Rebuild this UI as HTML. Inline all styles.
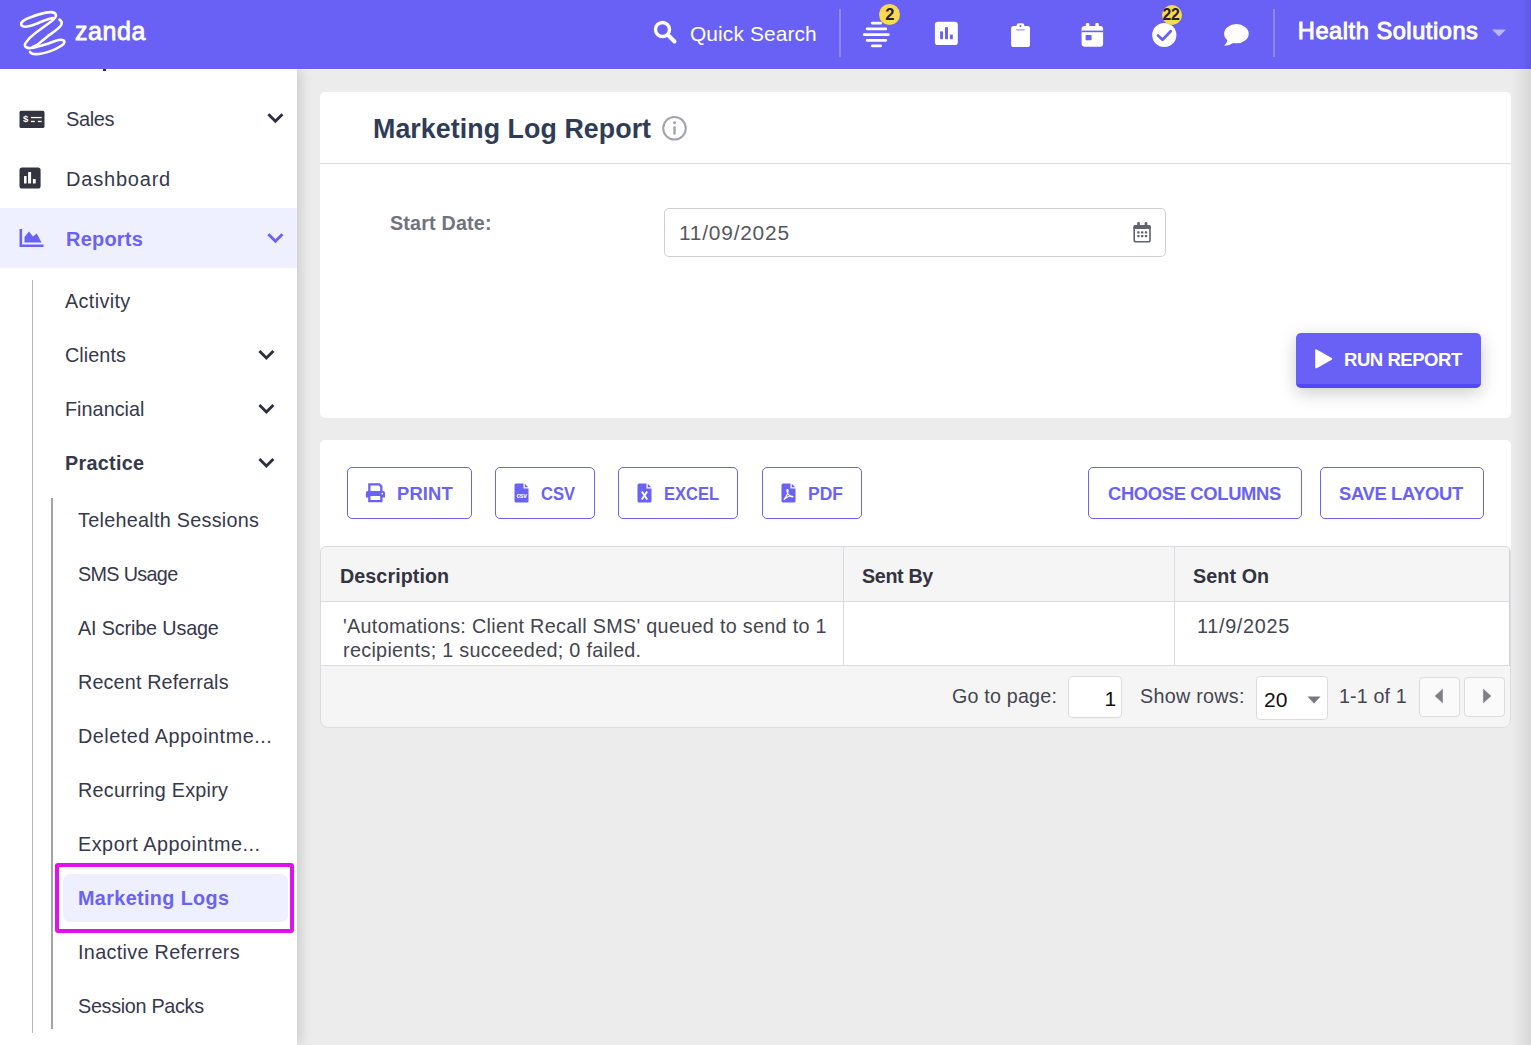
<!DOCTYPE html>
<html lang="en">
<head>
<meta charset="utf-8">
<title>Marketing Log Report</title>
<style>
*{box-sizing:border-box;margin:0;padding:0}
html,body{width:1531px;height:1045px;overflow:hidden}
body{font-family:"Liberation Sans",sans-serif;background:#ececec;color:#2d2f45;position:relative}
.abs{position:absolute}
.t{position:absolute;white-space:nowrap;line-height:1}
/* header */
#hdr{position:absolute;left:0;top:0;width:1531px;height:69px;background:#6961f5;z-index:5}
#hdr .t{color:#fff}
.vdiv{position:absolute;top:9px;width:2px;height:48px;background:#8f89f8}
.badge{position:absolute;width:21px;height:21px;border-radius:50%;background:#f9d94e;color:#23232f;font-weight:700;font-size:16.5px;line-height:21px;text-align:center}
/* sidebar */
#side{position:absolute;left:0;top:69px;width:297px;height:976px;background:#fff;box-shadow:3px 0 12px rgba(0,0,0,.15);z-index:3;overflow:hidden}
#side .t{color:#36384c}
.m1{font-size:20px}
.m2{font-size:19.8px}
/* main */
.card{position:absolute;background:#fff;border-radius:5px}
.obtn{position:absolute;top:467px;height:52px;border:1px solid #6962f4;border-radius:5px;background:#fff;color:#6962f4;font-weight:700;font-size:18.4px;letter-spacing:-.35px;line-height:49px;white-space:nowrap}
.obtn span{position:absolute;top:1px}
.obtn svg{position:absolute}
</style>
</head>
<body>

<!-- ============ HEADER ============ -->
<div id="hdr">
  <svg class="abs" style="left:0;top:0" width="160" height="69" viewBox="0 0 160 69" fill="none" stroke="#fff" stroke-width="2.7" stroke-linecap="round" stroke-linejoin="round">
    <g transform="translate(42.9 33.4) scale(.955 .965) translate(-42.9 -33.4)"><path d="M53.6,17.5 C47,18.5 40,22 35.4,23.7 C29,26.2 22.5,28 20.5,25 C18.5,21.5 25,18.5 30.1,16.7 C35,14.8 41,12.8 46.1,11.9 C51,11 56,11.5 56.6,14.6 C57,17 54,19 51.5,21 L35.4,32.8 C31,36 27,40 24.7,43.5 C23.5,45.5 24,47 25.2,47.6 C27,48.8 28.5,48.8 30.1,48.6 C35,48 41,46.2 46.1,44.6 C51,43 55,41.2 59.5,40.3 C63,39.6 65.8,40.5 65.4,42.6 C65,44.5 64,45 62.2,46.2 C59,48.3 55,50.3 51.5,51.5 C46,53.4 40,55 35.4,54.9 C32.5,54.9 30.3,54.3 29.4,52.5"/>
    <path d="M60.3,19.1 C62.3,20.3 63.2,22 62.2,24.4 C60.3,28.3 53,32.5 48.3,36 L36.5,45.6 L32.2,47.5"/></g>
  </svg>
  <div class="t" style="left:75px;top:19px;font-size:25px;-webkit-text-stroke:.8px #fff;letter-spacing:.55px">zanda</div>

  <!-- search -->
  <svg class="abs" style="left:652px;top:19px" width="26" height="26" viewBox="0 0 26 26" fill="none" stroke="#fff" stroke-linecap="round">
    <circle cx="10.5" cy="10.5" r="7" stroke-width="3.4"/>
    <path d="M16,16 L22.5,22.5" stroke-width="4"/>
  </svg>
  <div class="t" style="left:690px;top:23.5px;font-size:20.9px;letter-spacing:.12px">Quick Search</div>
  <div class="vdiv" style="left:839px"></div>

  <!-- stack/list icon -->
  <svg class="abs" style="left:862px;top:20px" width="30" height="30" viewBox="0 0 30 30" fill="none" stroke="#fff" stroke-width="2.8" stroke-linecap="round">
    <path d="M10.3,3.2H18.6M5.1,8.9H23.8M2.2,14.6H26.4M5.1,20.3H23.8M10.3,25.9H18.6"/>
  </svg>
  <div class="badge" style="left:879.4px;top:4.4px">2</div>

  <!-- chart icon -->
  <svg class="abs" style="left:934px;top:21px" width="26" height="26" viewBox="0 0 26 26">
    <rect x=".9" y=".7" width="22.9" height="23.4" rx="3.2" fill="#fff"/>
    <rect x="6.1" y="10.4" width="2.9" height="7.8" fill="#6961f5"/>
    <rect x="11" y="6.2" width="3" height="12" fill="#6961f5"/>
    <rect x="15.9" y="13.6" width="2.9" height="4.6" fill="#6961f5"/>
  </svg>

  <!-- clipboard -->
  <svg class="abs" style="left:1008px;top:20px" width="24" height="30" viewBox="0 0 24 30">
    <rect x="3.1" y="5.9" width="18.9" height="21.1" rx="2.6" fill="#fff"/>
    <rect x="8.6" y="3.3" width="7.8" height="6" rx="2.4" fill="#fff"/>
    <circle cx="12.5" cy="6.1" r="1" fill="#6961f5"/>
    <rect x="8.2" y="9.5" width="8.6" height=".8" fill="#6961f5"/>
  </svg>

  <!-- calendar -->
  <svg class="abs" style="left:1079px;top:20px" width="26" height="30" viewBox="-.6 0 26 30">
    <rect x="2" y="6" width="21.5" height="20.8" rx="3" fill="#fff"/>
    <rect x="6.3" y="3" width="3.4" height="6" rx="1.2" fill="#fff"/>
    <rect x="15.8" y="3" width="3.4" height="6" rx="1.2" fill="#fff"/>
    <rect x="2" y="10.6" width="21.5" height="1.6" fill="#6961f5"/>
    <rect x="6" y="15" width="6" height="5.3" rx=".8" fill="#6961f5"/>
  </svg>

  <!-- check circle -->
  <svg class="abs" style="left:1150px;top:21px" width="28" height="28" viewBox="0 0 28 28">
    <circle cx="14.3" cy="14" r="12.1" fill="#fff"/>
    <path d="M8,14.4 L12.5,18.7 L20.7,10.2" fill="none" stroke="#6961f5" stroke-width="2.7" stroke-linecap="round" stroke-linejoin="round"/>
  </svg>
  <div class="badge" style="left:1162px;top:5px;width:20px;height:20px;line-height:20px;font-size:15.8px;letter-spacing:-.5px;text-indent:-2.2px;overflow:visible;white-space:nowrap">22</div>

  <!-- chat bubble -->
  <svg class="abs" style="left:1222px;top:22px" width="30" height="28" viewBox="0 0 30 28">
    <ellipse cx="14.4" cy="11.7" rx="12.3" ry="9.6" fill="#fff"/>
    <path d="M5.6,16.5 C5.2,20 4,22 2,23.6 C5.8,23.8 9.3,22.6 11.8,20.5 Z" fill="#fff"/>
  </svg>
  <div class="vdiv" style="left:1273px"></div>
  <div class="abs" style="right:0;top:0;width:9px;height:69px;background:linear-gradient(to right,rgba(0,0,0,0),rgba(0,0,0,.09))"></div>
  <div class="t" style="left:1297.8px;top:19.5px;font-size:23.6px;-webkit-text-stroke:.95px #fff;letter-spacing:.55px">Health Solutions</div>
  <svg class="abs" style="left:1491px;top:28px" width="16" height="10" viewBox="0 0 16 10"><path d="M1,1.5H15L8,8.5Z" fill="#b9b5fb"/></svg>
</div>

<!-- ============ SIDEBAR ============ -->
<div id="side">
  <!-- clipped previous item descender -->
  <div class="abs" style="left:103px;top:0;width:3px;height:2px;background:#2d2f45"></div>

  <!-- Sales -->
  <svg class="abs" style="left:19px;top:41.3px" width="27" height="20" viewBox="0 0 27 20">
    <rect x=".5" y=".8" width="25" height="17.3" rx="1.6" fill="#33343f"/>
    <text x="3.9" y="12.2" font-family="Liberation Sans,sans-serif" font-size="9.6" font-weight="700" fill="#fff">$</text>
    <rect x="11.9" y="6.9" width="10.8" height="1.3" fill="#fff"/>
    <rect x="11.9" y="10.8" width="3.9" height="1.3" fill="#fff"/><rect x="18.9" y="10.8" width="3.8" height="1.3" fill="#fff"/>
  </svg>
  <div class="t m1" style="left:66px;top:40px;letter-spacing:-.4px">Sales</div>
  <svg class="abs" style="left:266px;top:43px" width="18" height="14" viewBox="0 .8 18 14"><path d="M2.4,3 L9.4,10 L16.4,3" fill="none" stroke="#2d2f45" stroke-width="2.9"/></svg>

  <!-- Dashboard -->
  <svg class="abs" style="left:19px;top:98px" width="23" height="23" viewBox="0 0 23 23">
    <rect x=".5" y=".4" width="21.1" height="21.1" rx="2.6" fill="#33343f"/>
    <rect x="5" y="9.1" width="2.6" height="7.3" rx=".5" fill="#fff"/><rect x="9.1" y="5" width="3" height="11.4" rx=".5" fill="#fff"/><rect x="13.9" y="12.1" width="2.8" height="4.3" rx=".5" fill="#fff"/>
  </svg>
  <div class="t m1" style="left:66px;top:100px;letter-spacing:.8px">Dashboard</div>

  <!-- Reports (active) -->
  <div class="abs" style="left:0;top:139px;width:297px;height:60px;background:#eef0ff"></div>
  <svg class="abs" style="left:19px;top:159px" width="26" height="20" viewBox="0 0 26 20">
    <path d="M1.8,1 V17.8 H24.5" fill="none" stroke="#6962f4" stroke-width="2.6"/>
    <path d="M5.5,14.5 V9 L10,3.5 L14,8.5 L17.8,5.5 L22.5,14.5 Z" fill="#6962f4"/>
  </svg>
  <div class="t m1" style="left:66px;top:160px;font-weight:700;color:#6962f4;font-size:20px;letter-spacing:.2px">Reports</div>
  <svg class="abs" style="left:266px;top:163px" width="18" height="14" viewBox="0 .8 18 14"><path d="M2.4,3 L9.4,10 L16.4,3" fill="none" stroke="#6962f4" stroke-width="2.9"/></svg>

  <!-- tree lines -->
  <div class="abs" style="left:32px;top:211px;width:1px;height:753px;background:#b4b4bd"></div>
  <div class="abs" style="left:51px;top:429px;width:2px;height:531px;background:#a4a4af"></div>

  <!-- level 2 -->
  <div class="t m2" style="left:65px;top:223px;letter-spacing:0.36px">Activity</div>
  <div class="t m2" style="left:65px;top:277px;letter-spacing:0.07px">Clients</div>
  <svg class="abs" style="left:257px;top:279px" width="18" height="14" viewBox="0 0 18 14"><path d="M2.4,3 L9.4,10 L16.4,3" fill="none" stroke="#2d2f45" stroke-width="2.9"/></svg>
  <div class="t m2" style="left:65px;top:331px;letter-spacing:0.04px">Financial</div>
  <svg class="abs" style="left:257px;top:333px" width="18" height="14" viewBox="0 0 18 14"><path d="M2.4,3 L9.4,10 L16.4,3" fill="none" stroke="#2d2f45" stroke-width="2.9"/></svg>
  <div class="t m2" style="left:65px;top:385px;font-weight:700;letter-spacing:0.29px">Practice</div>
  <svg class="abs" style="left:257px;top:387px" width="18" height="14" viewBox="0 0 18 14"><path d="M2.4,3 L9.4,10 L16.4,3" fill="none" stroke="#2d2f45" stroke-width="2.9"/></svg>

  <!-- level 3 -->
  <div class="t m2" style="left:78px;top:442px;letter-spacing:0.28px">Telehealth Sessions</div>
  <div class="t m2" style="left:78px;top:496px;letter-spacing:-0.67px">SMS Usage</div>
  <div class="t m2" style="left:78px;top:550px;letter-spacing:-0.15px">AI Scribe Usage</div>
  <div class="t m2" style="left:78px;top:604px;letter-spacing:0.14px">Recent Referrals</div>
  <div class="t m2" style="left:78px;top:658px;letter-spacing:0.53px">Deleted Appointme...</div>
  <div class="t m2" style="left:78px;top:712px;letter-spacing:0.25px">Recurring Expiry</div>
  <div class="t m2" style="left:78px;top:766px;letter-spacing:0.52px">Export Appointme...</div>
  <div class="abs" style="left:55px;top:794px;width:239px;height:70px;border:4px solid #e010ef;border-radius:3px"></div>
  <div class="abs" style="left:63px;top:805px;width:225px;height:48px;background:#eef0ff;border-radius:7px"></div>
  <div class="t m2" style="left:78px;top:820px;font-weight:700;color:#6962f4;letter-spacing:0.37px">Marketing Logs</div>
  <div class="t m2" style="left:78px;top:874px;letter-spacing:0.32px">Inactive Referrers</div>
  <div class="t m2" style="left:78px;top:928px;letter-spacing:-0.31px">Session Packs</div>
</div>

<!-- ============ MAIN ============ -->
<div class="abs" style="left:297px;top:69px;width:1234px;height:1px;background:#f3f3ef"></div>
<div class="abs" style="right:0;top:0;width:20px;height:1045px;background:linear-gradient(to right,rgba(0,0,0,0),rgba(0,0,0,.085));z-index:4"></div>
<div class="card" style="left:320px;top:92px;width:1191px;height:326px"></div>
<div class="abs" style="left:320px;top:163px;width:1191px;height:1px;background:#d9d9de"></div>
<div class="t" style="left:373px;top:115.5px;font-size:26.8px;font-weight:700;color:#303c57;letter-spacing:.06px">Marketing Log Report</div>
<svg class="abs" style="left:661px;top:115px" width="27" height="27" viewBox="0 0 27 27">
  <circle cx="13.5" cy="13.2" r="11.3" fill="none" stroke="#a3a3ad" stroke-width="2"/>
  <rect x="12.3" y="11.3" width="2.4" height="8.5" rx="1" fill="#a3a3ad"/><circle cx="13.5" cy="7.8" r="1.5" fill="#a3a3ad"/>
</svg>

<div class="t" style="left:390px;top:214px;font-size:19.7px;font-weight:700;color:#6f7380;letter-spacing:.2px">Start Date:</div>
<div class="abs" style="left:664px;top:208px;width:502px;height:49px;border:1px solid #cfcfd4;border-radius:5px;background:#fff"></div>
<div class="t" style="left:679px;top:223px;font-size:20.9px;color:#55575f;letter-spacing:.78px">11/09/2025</div>
<svg class="abs" style="left:1132px;top:221px" width="20" height="23" viewBox="0 0 20 23">
  <rect x="2.2" y="4.7" width="15.8" height="16.1" rx="1.8" fill="none" stroke="#60626e" stroke-width="1.6"/>
  <path d="M1.4,8 V6 A2,2 0 0 1 3.4,3.9 H16.8 A2,2 0 0 1 18.8,6 V8 Z" fill="#60626e"/>
  <rect x="5.2" y="1.1" width="2.7" height="4.5" rx="1.3" fill="#60626e"/><rect x="12.6" y="1.1" width="2.7" height="4.5" rx="1.3" fill="#60626e"/>
  <g fill="#60626e"><rect x="5.2" y="10.2" width="2.4" height="2.4" rx=".7"/><rect x="9" y="10.2" width="2.4" height="2.4" rx=".7"/><rect x="12.8" y="10.2" width="2.4" height="2.4" rx=".7"/>
  <rect x="5.2" y="13.9" width="2.4" height="2.4" rx=".7"/><rect x="9" y="13.9" width="2.4" height="2.4" rx=".7"/><rect x="12.8" y="13.9" width="2.4" height="2.4" rx=".7"/></g>
</svg>

<!-- run report -->
<div class="abs" style="left:1296px;top:333px;width:185px;height:55px;background:#6961f5;border-bottom:4px solid #5349f4;border-radius:5px;box-shadow:0 5px 18px rgba(0,0,0,.2)"></div>
<svg class="abs" style="left:1314px;top:348px" width="20" height="22" viewBox="0 0 20 22"><path d="M2.2,2.3 L17.2,10.8 L2.2,19.3 Z" fill="#fff" stroke="#fff" stroke-width="2" stroke-linejoin="round"/></svg>
<div class="t" style="left:1344px;top:350.5px;font-size:18.5px;font-weight:700;color:#fff;letter-spacing:-.45px">RUN REPORT</div>

<!-- card 2 -->
<div class="card" style="left:320px;top:440px;width:1191px;height:120px"></div>

<div class="obtn" style="left:347px;width:125px">
  <svg style="left:17px;top:15px" width="21" height="20" viewBox="0 0 21 20" fill="#6962f4"><path d="M3.2,.2 H14.8 L17.5,2.9 V8.6 H15.2 V3.9 L13.9,2.6 H5.5 V8.6 H3.2 Z"/><path fill-rule="evenodd" d="M3,8.1 H18 A2,2 0 0 1 20,10.1 V14.6 H17.5 V19.3 H3.2 V14.6 H.9 V10.1 A2,2 0 0 1 3,8.1 Z M5.5,13 V17 H15.2 V13 Z"/><circle cx="17.3" cy="10.7" r=".85" fill="#fff"/></svg>
  <span style="left:49px;letter-spacing:.15px">PRINT</span>
</div>
<div class="obtn" style="left:495px;width:100px">
  <svg style="left:18px;top:15px" width="16" height="20" viewBox="0 0 16 20"><path d="M2,.5 H9.5 V5.5 H14.5 V18 A1.5,1.5 0 0 1 13,19.5 H2 A1.5,1.5 0 0 1 .5,18 V2 A1.5,1.5 0 0 1 2,.5 Z M10.8,.8 L14.2,4.3 H10.8 Z" fill="#6962f4"/><text x="7.5" y="15" text-anchor="middle" font-family="Liberation Sans,sans-serif" font-size="6.6" font-weight="700" fill="#fff">csv</text></svg>
  <span style="left:45px;letter-spacing:0;transform:scaleX(.905);transform-origin:0 50%">CSV</span>
</div>
<div class="obtn" style="left:618px;width:120px">
  <svg style="left:18px;top:15px" width="16" height="20" viewBox="0 0 16 20"><path d="M2,.5 H9.5 V5.5 H14.5 V18 A1.5,1.5 0 0 1 13,19.5 H2 A1.5,1.5 0 0 1 .5,18 V2 A1.5,1.5 0 0 1 2,.5 Z M10.8,.8 L14.2,4.3 H10.8 Z" fill="#6962f4"/><path d="M4.8,8.5 L10.2,16.5 M10.2,8.5 L4.8,16.5" stroke="#fff" stroke-width="1.9" fill="none"/></svg>
  <span style="left:45px;letter-spacing:0;transform:scaleX(.897);transform-origin:0 50%">EXCEL</span>
</div>
<div class="obtn" style="left:762px;width:100px">
  <svg style="left:18px;top:15px" width="16" height="20" viewBox="0 0 16 20"><path d="M2,.5 H9.5 V5.5 H14.5 V18 A1.5,1.5 0 0 1 13,19.5 H2 A1.5,1.5 0 0 1 .5,18 V2 A1.5,1.5 0 0 1 2,.5 Z M10.8,.8 L14.2,4.3 H10.8 Z" fill="#6962f4"/><path d="M6.2,6.5 C8,6 7.5,11 3.3,16.2 C2.5,17 3.5,16 6,14.3 C8.5,13 11,12.8 12,13.5 C12.5,14.5 9,14 6.8,10.5 C6,9 5.5,7 6.2,6.5" stroke="#fff" stroke-width="1.1" fill="none"/></svg>
  <span style="left:45px;letter-spacing:0;transform:scaleX(.948);transform-origin:0 50%">PDF</span>
</div>
<div class="obtn" style="left:1088px;width:214px"><span style="left:19px">CHOOSE COLUMNS</span></div>
<div class="obtn" style="left:1320px;width:164px"><span style="left:18px">SAVE LAYOUT</span></div>

<!-- grid -->
<div class="abs" style="left:320px;top:546px;width:1191px;height:182px;border:1px solid #dcdce0;border-radius:6px 6px 8px 8px;background:#f5f5f5"></div>
<div class="abs" style="left:321px;top:601px;width:1188px;height:65px;background:#fff;border-top:1px solid #dcdce0;border-bottom:1px solid #dcdce0"></div>
<div class="abs" style="left:843px;top:547px;width:1px;height:119px;background:#dcdce0"></div>
<div class="abs" style="left:1174px;top:547px;width:1px;height:119px;background:#dcdce0"></div>
<div class="abs" style="left:1509px;top:549px;width:1px;height:117px;background:#d2d2d9"></div>

<div class="t" style="left:340px;top:567px;font-size:19.7px;font-weight:700;color:#33343f;letter-spacing:.08px">Description</div>
<div class="t" style="left:862px;top:567px;font-size:19.7px;font-weight:700;color:#33343f;letter-spacing:-.35px">Sent By</div>
<div class="t" style="left:1193px;top:567px;font-size:19.7px;font-weight:700;color:#33343f;letter-spacing:.1px">Sent On</div>

<div class="t" style="left:343px;top:616.5px;font-size:19.8px;color:#44454f;letter-spacing:.3px">'Automations: Client Recall SMS' queued to send to 1</div>
<div class="t" style="left:343px;top:641px;font-size:19.8px;color:#44454f;letter-spacing:.3px">recipients; 1 succeeded; 0 failed.</div>
<div class="t" style="left:1197px;top:616.5px;font-size:19.8px;color:#44454f;letter-spacing:.7px">11/9/2025</div>

<!-- pager -->
<div class="t" style="left:952px;top:687px;font-size:19.7px;color:#44454f;letter-spacing:.2px">Go to page:</div>
<div class="abs" style="left:1068px;top:676px;width:54px;height:42px;border:1px solid #dcdce0;border-radius:4px;background:#fff"></div>
<div class="t" style="left:1104.5px;top:688px;font-size:21px;color:#111">1</div>
<div class="t" style="left:1140px;top:687px;font-size:19.7px;color:#44454f;letter-spacing:.3px">Show rows:</div>
<div class="abs" style="left:1256px;top:676px;width:72px;height:44px;border:1px solid #dcdce0;border-radius:4px;background:#fff"></div>
<div class="t" style="left:1264px;top:688.5px;font-size:21px;color:#111">20</div>
<svg class="abs" style="left:1306px;top:694.5px" width="16" height="10" viewBox="0 0 16 10"><path d="M1.5,1.5H14.5L8,8.5Z" fill="#77787f"/></svg>
<div class="t" style="left:1339px;top:687px;font-size:19.7px;color:#44454f;letter-spacing:.15px">1-1 of 1</div>
<div class="abs" style="left:1419px;top:677px;width:41px;height:40px;border:1px solid #dcdce0;border-radius:4px;background:#fafafa"></div>
<svg class="abs" style="left:1433px;top:687px" width="12" height="18" viewBox="0 0 12 18"><path d="M9.8,1.8 V16.2 L1.8,9Z" fill="#808086"/></svg>
<div class="abs" style="left:1464px;top:677px;width:41px;height:40px;border:1px solid #dcdce0;border-radius:4px;background:#fafafa"></div>
<svg class="abs" style="left:1480.5px;top:687px" width="12" height="18" viewBox="0 0 12 18"><path d="M2.2,1.8 V16.2 L10.2,9Z" fill="#808086"/></svg>

</body>
</html>
